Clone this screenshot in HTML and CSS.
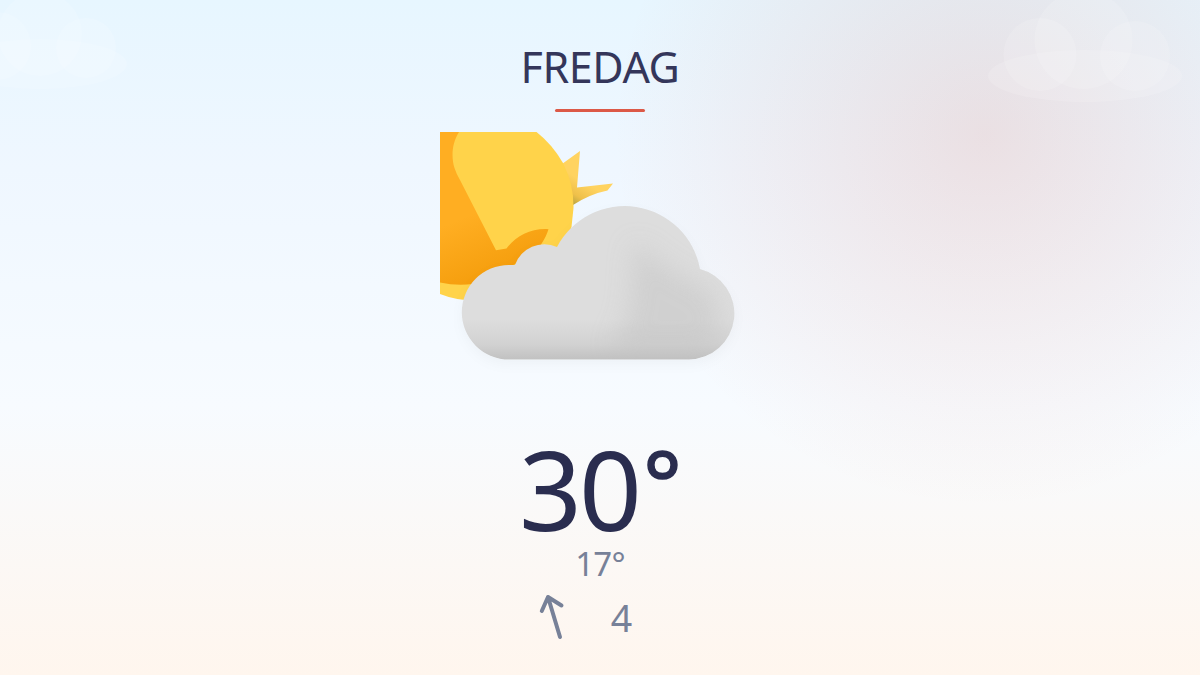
FILE: index.html
```
<!DOCTYPE html>
<html lang="sv">
<head>
    <meta charset="UTF-8">
    <meta name="viewport" content="width=device-width, initial-scale=1.0">
    <title>Väder</title>
    <link rel="stylesheet" href="styles.css">
</head>
<body>
    <!-- Soft clouds behind the forecast -->
    <svg class="sky" viewBox="0 0 1200 675" aria-hidden="true">
        <g class="sky-cloud">
            <ellipse cx="40" cy="64" rx="87" ry="25"/>
            <circle cx="-3" cy="46" r="34"/>
            <circle cx="40" cy="34" r="42"/>
            <circle cx="86" cy="48" r="30"/>
        </g>
        <g class="sky-cloud">
            <ellipse cx="1085" cy="76" rx="97" ry="26"/>
            <circle cx="1040" cy="54.5" r="36.5"/>
            <circle cx="1083.5" cy="40" r="49"/>
            <circle cx="1135" cy="56" r="35"/>
        </g>
    </svg>

    <div class="forecast">
        <h1 class="day">FREDAG</h1>
        <div class="divider"></div>

        <svg class="weather-icon" viewBox="440 132 320 270" role="img" aria-label="Halvklart">
            <defs>
                <linearGradient id="rayFill" gradientUnits="userSpaceOnUse" x1="570" y1="206" x2="584" y2="182">
                    <stop offset="0" stop-color="#a89c3f"/>
                    <stop offset="0.45" stop-color="#efc04a"/>
                    <stop offset="1" stop-color="#ffd360"/>
                </linearGradient>
                <linearGradient id="sunShade" gradientUnits="userSpaceOnUse" x1="470" y1="215" x2="495" y2="275">
                    <stop offset="0" stop-color="#ffae22"/>
                    <stop offset="1" stop-color="#f59e0d"/>
                </linearGradient>
                <linearGradient id="cloudBase" x1="0" y1="0" x2="0" y2="1">
                    <stop offset="0.74" stop-color="#b8b8b8" stop-opacity="0"/>
                    <stop offset="0.9" stop-color="#b8b8b8" stop-opacity="0.3"/>
                    <stop offset="1" stop-color="#b8b8b8" stop-opacity="0.75"/>
                </linearGradient>
                <filter id="soft" x="-40%" y="-40%" width="180%" height="180%">
                    <feGaussianBlur stdDeviation="12"/>
                </filter>
                <path id="cloudShape" d="M509 359.500A47 47 0 0 1 509 265L515 265A31 31 0 0 1 557 247A76.500 76.500 0 0 1 700 269A46 46 0 0 1 689 359.500Z"/>
                <clipPath id="cloudClip"><use href="#cloudShape"/></clipPath>
            </defs>

            <!-- Sun -->
            <path fill="url(#rayFill)" d="M562 164L580 151L577 187.500L613 183.500L607.500 190.500Q590 194 573 205Z"/>
            <path fill="#ffd34a" d="M440 132H536.500Q552 144 563 163Q574 185 573.500 208L571.500 227L560 260L480 301Q457 301 440 294Z"/>
            <path fill="url(#sunShade)" d="M440 132H459C452 143 451 157 454.500 168Q456 173 460 180L496 250.200L506.500 248.500C516 236 531 228 548.500 229.200C545 240 540 247 530 257L473 284Q456 286 440 282.500Z"/>

            <!-- Cloud -->
            <use class="cloud" href="#cloudShape"/>
            <g clip-path="url(#cloudClip)">
                <path filter="url(#soft)" fill="#cbcbcb" opacity="0.7" d="M634 242L672 270L712 292L724 330L704 350H612L630 310Z"/>
                <use href="#cloudShape" fill="url(#cloudBase)"/>
            </g>
        </svg>

        <div class="temp-high">30<span class="degree">°</span></div>
        <div class="temp-low">17°</div>
        <div class="wind">
            <svg class="wind-arrow" viewBox="0 0 28 46" aria-hidden="true">
                <path d="M20 42L8 2M1.800 16L8 2L21.500 10.500"/>
            </svg>
            <span class="wind-speed">4</span>
        </div>
    </div>
</body>
</html>
```

FILE: styles.css
```
/* General Reset */
* {
    box-sizing: border-box;
}

body, html {
    margin: 0;
    padding: 0;
    height: 100%;
    overflow: hidden;
}

body {
    font-family: 'Noto Sans', 'Open Sans', sans-serif;
    color: #2a2d4f;
    background:
        radial-gradient(circle 372px at 985px 135px, rgba(215, 84, 58, 0.14), rgba(215, 84, 58, 0)),
        linear-gradient(180deg, #e7f6ff 0%, #eff7ff 25%, #f7fbff 60%, #fff6ee 100%);
}

/* Background clouds */
.sky {
    position: absolute;
    top: 0;
    left: 0;
    width: 1200px;
    height: 675px;
}

.sky-cloud {
    fill: rgba(255, 255, 255, 0.14);
}

/* Forecast */
.forecast {
    position: relative;
    display: flex;
    flex-direction: column;
    align-items: center;
    padding-top: 36px;
}

.day {
    margin: 0;
    font-size: 43px;
    font-weight: 400;
    line-height: 62px;
    letter-spacing: -0.4px;
    color: #34365a;
}

.divider {
    width: 90px;
    height: 3px;
    margin-top: 11px;
    border-radius: 2px;
    background: #dc5947;
}

.weather-icon {
    width: 320px;
    height: 270px;
    margin-top: 20px;
}

.cloud {
    fill: #dddddd;
    filter: drop-shadow(0 5px 6px rgba(0, 0, 0, 0.03));
}

.temp-high {
    height: 120px;
    margin-top: 26px;
    padding-right: 2px;
    font-size: 110px;
    line-height: 120px;
    letter-spacing: -3px;
}

.degree {
    margin-left: 4px;
    font-size: 91px;
    line-height: 1;
    vertical-align: 14px;
    -webkit-text-stroke: 1.5px #2a2d4f;
}

.temp-low {
    margin-top: -4px;
    font-size: 33px;
    line-height: 40px;
    letter-spacing: -0.8px;
    color: #778198;
}

.wind {
    display: flex;
    align-items: center;
    gap: 43px;
    margin-top: 9px;
    margin-right: 28px;
    color: #778198;
}

.wind-arrow {
    width: 28px;
    height: 46px;
    fill: none;
    stroke: #778198;
    stroke-width: 4;
    stroke-linecap: round;
    stroke-linejoin: round;
    overflow: visible;
}

.wind-speed {
    font-size: 37.5px;
    line-height: 50px;
}
```
